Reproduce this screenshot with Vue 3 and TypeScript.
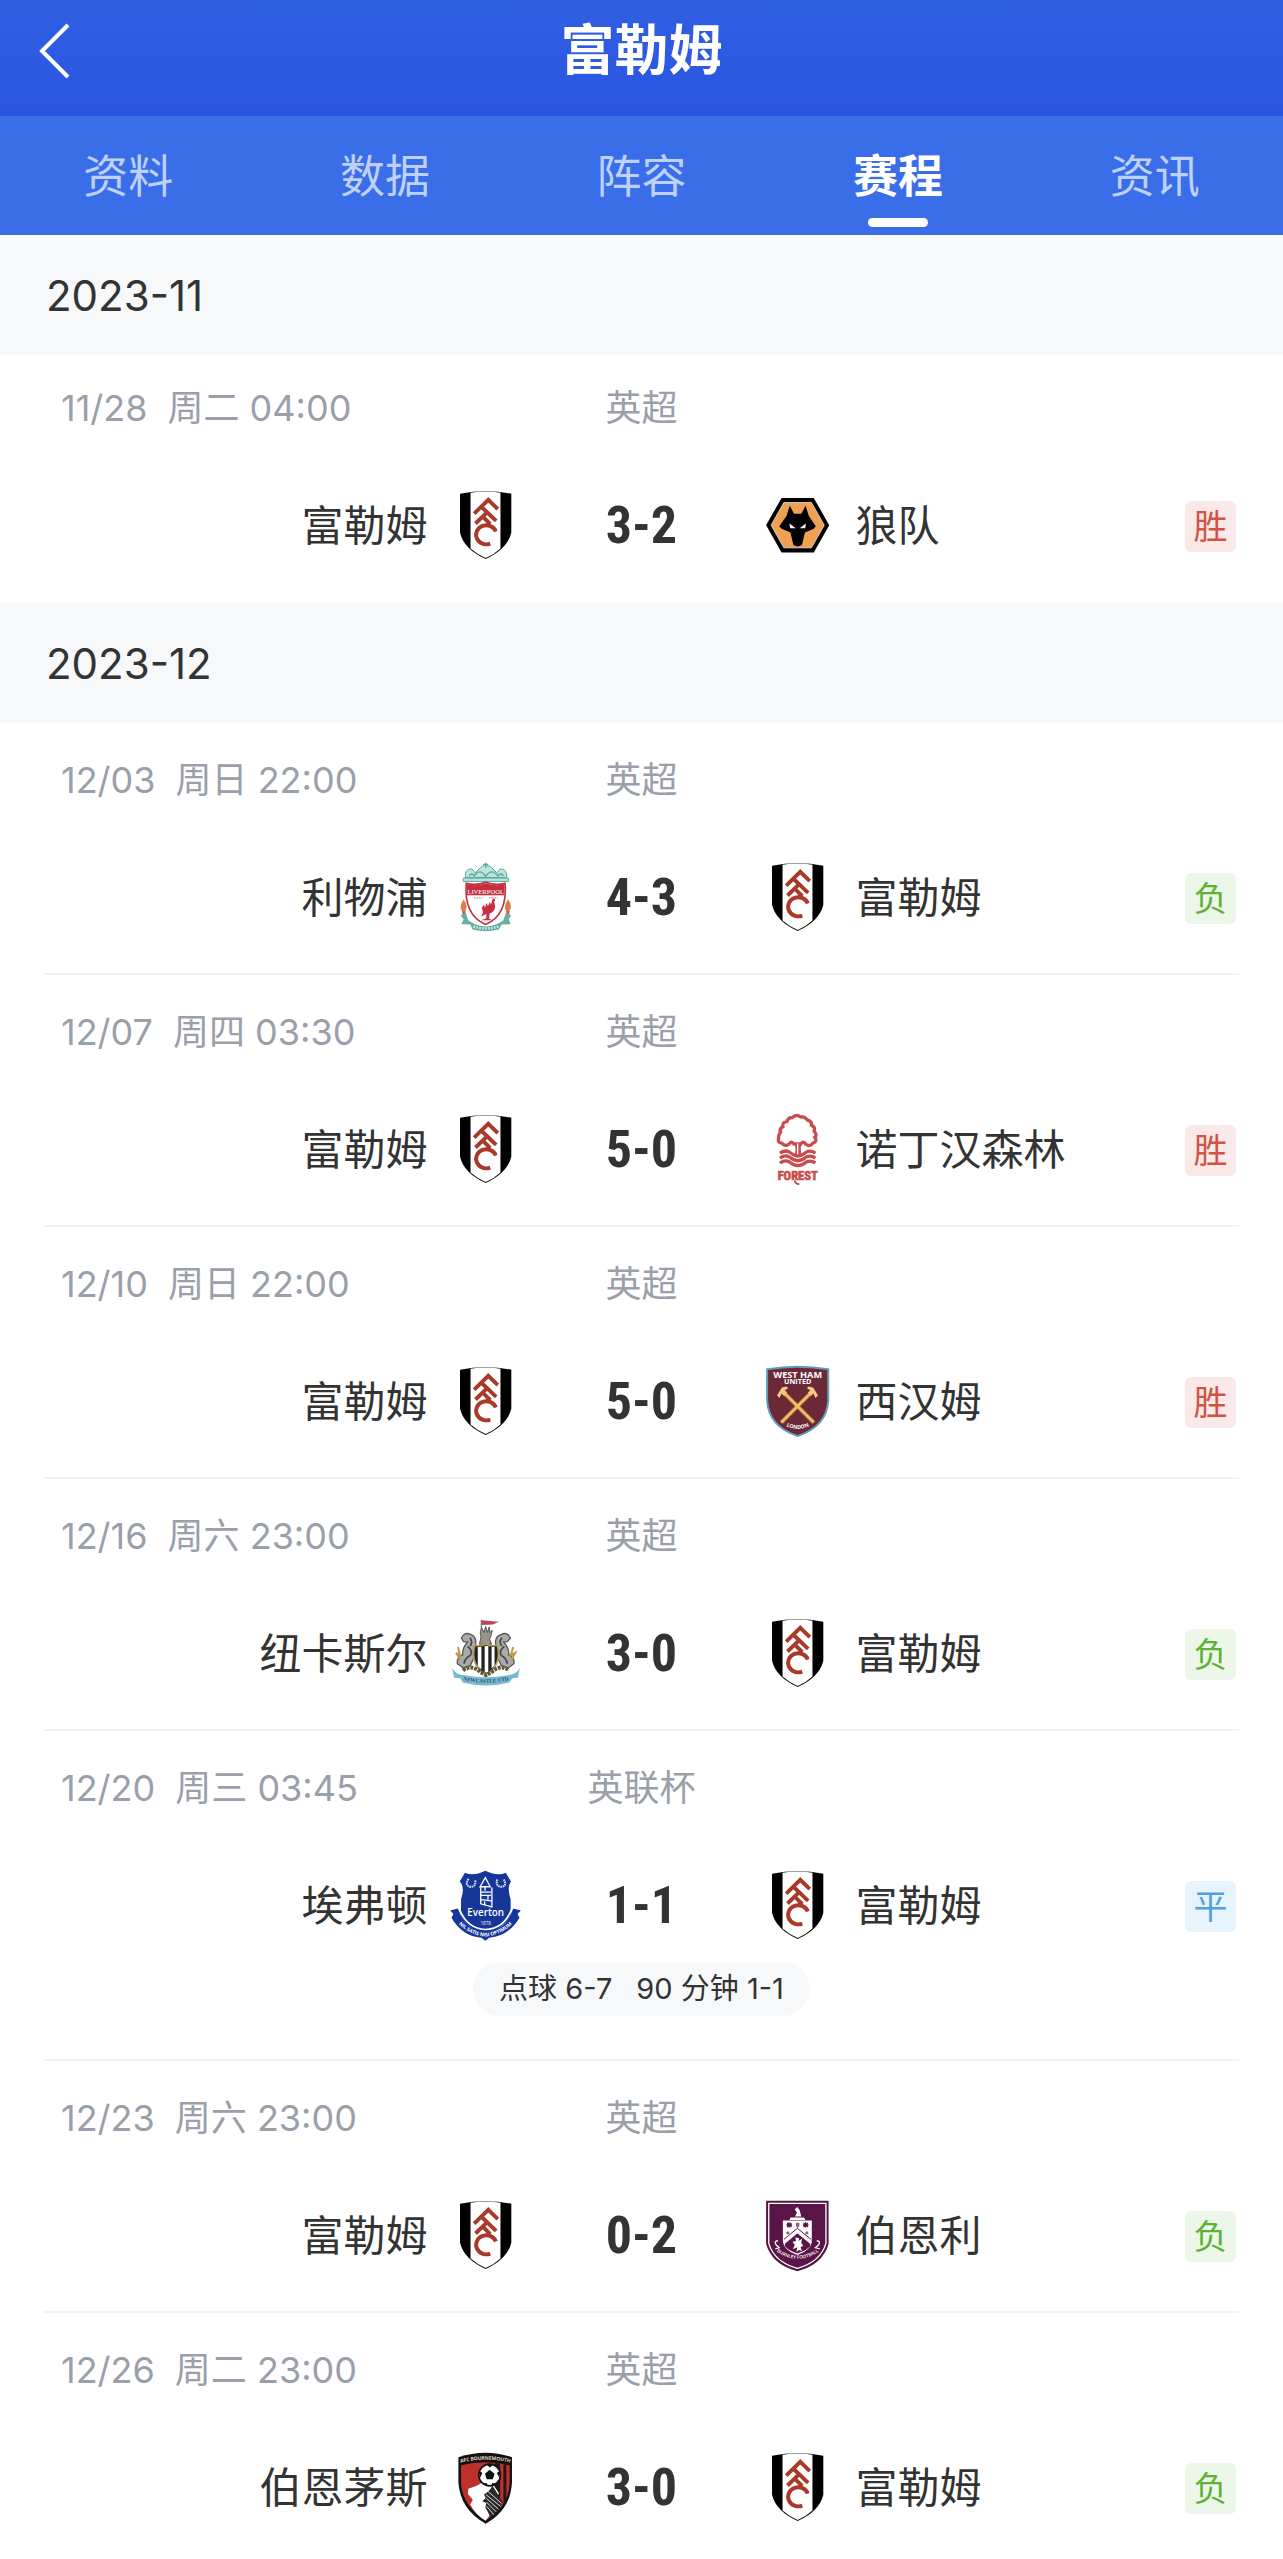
<script setup lang="ts">
type Outcome = 'win' | 'loss' | 'draw'

interface Team {
  name: string
  crest: string
}

interface Match {
  date: string
  time: string
  league: string
  home: Team
  away: Team
  score: string
  outcome: Outcome
  notes?: string[]
}

interface Month {
  label: string
  matches: Match[]
}

const fulham: Team = { name: '富勒姆', crest: 'fulham' }

const tabs = ['资料', '数据', '阵容', '赛程', '资讯']
const activeTab = '赛程'

const outcomeLabel: Record<Outcome, string> = { win: '胜', loss: '负', draw: '平' }

const months: Month[] = [
  {
    label: '2023-11',
    matches: [
      { date: '11/28', time: '周二 04:00', league: '英超', home: fulham, away: { name: '狼队', crest: 'wolves' }, score: '3-2', outcome: 'win' },
    ],
  },
  {
    label: '2023-12',
    matches: [
      { date: '12/03', time: '周日 22:00', league: '英超', home: { name: '利物浦', crest: 'liverpool' }, away: fulham, score: '4-3', outcome: 'loss' },
      { date: '12/07', time: '周四 03:30', league: '英超', home: fulham, away: { name: '诺丁汉森林', crest: 'forest' }, score: '5-0', outcome: 'win' },
      { date: '12/10', time: '周日 22:00', league: '英超', home: fulham, away: { name: '西汉姆', crest: 'westham' }, score: '5-0', outcome: 'win' },
      { date: '12/16', time: '周六 23:00', league: '英超', home: { name: '纽卡斯尔', crest: 'newcastle' }, away: fulham, score: '3-0', outcome: 'loss' },
      { date: '12/20', time: '周三 03:45', league: '英联杯', home: { name: '埃弗顿', crest: 'everton' }, away: fulham, score: '1-1', outcome: 'draw', notes: ['点球 6-7', '90 分钟 1-1'] },
      { date: '12/23', time: '周六 23:00', league: '英超', home: fulham, away: { name: '伯恩利', crest: 'burnley' }, score: '0-2', outcome: 'loss' },
      { date: '12/26', time: '周二 23:00', league: '英超', home: { name: '伯恩茅斯', crest: 'bournemouth' }, away: fulham, score: '3-0', outcome: 'loss' },
    ],
  },
]

// Club crests, drawn on a shared 210-unit grid.
const crests: Record<string, string> = {
  fulham: `
    <path d="M30 9Q108-6 186 9V128Q174 178 108 208Q42 178 30 128Z" fill="#000" />
    <path d="M62 6Q108-1 153 6V176Q134 194 108 205Q82 194 62 176Z" fill="#fff" />
    <path d="M73 70L116 28L145 56M95 49L140 92M77 100L112 66M99 79L122 102M139 124A31 29 0 1 0 122 161" fill="none" stroke="#a93a2b" stroke-width="12" />`,
  wolves: `
    <path d="M59 22H157L204 105L157 188H59L12 105Z" fill="#000" />
    <path d="M66 36H150L189 105L150 174H66L27 105Z" fill="#f0a052" stroke="#fff" stroke-width="2" />
    <path d="M84 46L97 70H119L132 46L142 77L163 108L157 116L130 127L121 165Q108 174 95 165L86 127L59 116L52 108L74 77Z" fill="#000" />
    <path d="M83 100L102 114H85ZM133 100L114 114H131Z" fill="#fff" />`,
  liverpool: `
    <path d="M40 47H178V57H40ZM46 45Q44 18 66 19L76 31L92 15L108 5L126 15L142 31L152 19Q174 18 172 45Z" fill="#bfe3dd" stroke="#55a99d" stroke-width="3" />
    <path d="M108 0V16M100 5H116M72 42Q90 14 108 42Q126 14 146 42M58 40Q66 28 74 42M144 42Q154 28 162 40" fill="none" stroke="#55a99d" stroke-width="4" />
    <path d="M49 63Q80 70 108 60Q138 70 167 63Q175 160 108 188Q41 160 49 63Z" fill="#fff" stroke="#c52f40" stroke-width="5" />
    <path d="M51 66Q80 72 108 63Q138 72 165 66V99H51Z" fill="#c52f40" />
    <text x="108" y="94" text-anchor="middle" font-size="20" font-family="Liberation Serif" fill="#fff">LIVERPOOL</text>
    <path d="M72 107H98M118 107H144" stroke="#dc8b91" stroke-width="4" stroke-dasharray="5 3" />
    <path d="M130 108Q141 112 134 119L137 134Q135 149 120 155L118 170L128 175H94L110 169V156L94 164L100 151L96 137L103 127L106 138L110 123L115 132L121 120L124 128Z" fill="#c52f40" />
    <path d="M34 145Q27 130 41 111Q55 130 47 145ZM169 145Q162 130 176 111Q190 130 182 145Z" fill="#d78149" />
    <path d="M36 145H47L45 169H39ZM170 145H181L178 169H172Z" fill="#d45752" />
    <path d="M32 160L48 153L55 175Q80 193 108 194Q138 193 162 175L169 153L186 160L178 172L184 187L157 188L148 203Q108 214 68 203L61 188L34 187L41 172Z" fill="#67afa3" />
    <path d="M71 194Q108 207 147 194" fill="none" stroke="#c8e8e4" stroke-width="8" stroke-dasharray="5 4" />`,
  forest: `
    <path d="M99 93Q91 77 82 89Q70 99 60 87Q45 84 50 72Q49 61 56 54Q51 43 63 37Q60 23 75 21Q79 8 91 9Q104-3 117 7Q130 5 137 16Q151 19 150 32Q163 38 158 50Q169 62 160 69Q169 81 155 86Q146 100 132 89Q122 77 116 93" fill="#fff" stroke="#c94b4b" stroke-width="10" />
    <path d="M96 84Q106 105 98 124H121Q114 107 121 84Z" fill="#c94b4b" />
    <path d="M108 88V124" stroke="#fff" stroke-width="4" />
    <path d="M54 117Q70 106 83 114Q109 137 134 114Q148 107 162 117M54 132Q70 121 83 129Q109 151 134 129Q148 122 162 132M54 147Q70 136 83 144Q109 166 134 144Q148 137 162 147" fill="none" stroke="#c94b4b" stroke-width="10" />
    <text x="108" y="200" text-anchor="middle" font-size="38" font-weight="700" font-family="Roboto Condensed, Roboto" fill="#c94b4b" stroke="#c94b4b" stroke-width="2">FOREST</text>
    <path d="M99 200Q101 212 113 211" fill="none" stroke="#c94b4b" stroke-width="6" />`,
  westham: `
    <path d="M15 8Q108-8 201 8V102Q197 181 108 211Q19 181 15 102Z" fill="#6b2938" stroke="#629bb9" stroke-width="6" />
    <text x="108" y="33" text-anchor="middle" font-size="28" font-weight="700" font-family="Open Sans" fill="#fff">WEST HAM</text>
    <text x="108" y="52" text-anchor="middle" font-size="22" font-weight="700" font-family="Open Sans" fill="#fff">UNITED</text>
    <path d="M68 81L157 170M147 81L58 170" stroke="#8d5535" stroke-width="14" />
    <path d="M68 81L157 170M147 81L58 170" stroke="#edbd63" stroke-width="9" />
    <path d="M45 88L60 63L74 60L79 66L69 72L76 79L67 89L59 82L53 95ZM170 88L155 63L141 60L136 66L146 72L139 79L148 89L156 82L162 95Z" fill="#f1ca85" />
    <path id="westham-arc" d="M66 177Q108 202 150 177" fill="none" />
    <text font-size="16" font-weight="700" font-family="Open Sans" fill="#fff" text-anchor="middle"><textPath href="#westham-arc" startOffset="50%">LONDON</textPath></text>`,
  newcastle: `
    <path d="M95 3V57" stroke="#777" stroke-width="4" />
    <path d="M96 5L148 9L130 18L96 19Z" fill="#bd4656" />
    <path d="M89 78L94 54Q88 37 97 29L103 43L108 24L113 42L119 25L120 43L128 35Q124 57 120 62L126 78Z" fill="#9a9687" stroke="#555" stroke-width="3" />
    <path d="M62 48Q43 39 34 59L41 70L53 71Q36 90 38 110Q20 116 22 137L40 150L61 143L72 119Q87 100 77 80Q82 55 62 48ZM156 48Q174 39 183 59L174 70L163 71Q180 90 178 110Q196 116 194 137L176 150L156 143L144 119Q129 100 139 80Q134 55 156 48Z" fill="#aaa" stroke="#555" stroke-width="4" />
    <path d="M53 84Q70 98 62 111Q45 119 42 137M165 84Q147 98 155 111Q171 119 174 137M60 58Q70 72 61 83M157 58Q147 72 157 83" fill="none" stroke="#444" stroke-width="5" />
    <path d="M24 86L30 112L18 104L31 124M192 86L184 112L198 104L187 124" fill="none" stroke="#bd9a45" stroke-width="6" />
    <path d="M75 80Q91 86 108 77Q125 86 143 80Q159 141 109 170Q59 141 75 80Z" fill="#222" stroke="#b49a56" stroke-width="5" />
    <path d="M84 86H95V154L84 145ZM105 83H116V164H105ZM126 86H135V143L126 151Z" fill="#fff" />
    <path d="M39 157Q66 138 91 162L109 172L128 161Q153 138 179 157" fill="none" stroke="#5e5b35" stroke-width="12" stroke-dasharray="9 3" />
    <path d="M6 149Q16 171 43 172Q110 185 175 172Q204 168 212 149L206 180L189 181L180 194Q108 213 38 194L31 181L12 180Z" fill="#78b9d2" />
    <path id="newcastle-arc" d="M36 186Q108 204 182 186" fill="none" />
    <text font-size="16" font-weight="700" font-family="Liberation Serif" fill="#2d5065" text-anchor="middle"><textPath href="#newcastle-arc" startOffset="50%">NEWCASTLE UTD</textPath></text>`,
  everton: `
    <path d="M45 6Q70 18 107 0Q145 18 169 6L185 33Q172 49 184 88V132Q168 174 107 196Q46 174 33 132V88Q46 49 29 33Z" fill="#16369a" />
    <path d="M0 121L23 115Q52 186 107 187Q166 186 192 115L215 121L205 132L211 143Q178 199 119 204L107 213L95 204Q36 199 4 143L10 132Z" fill="#16369a" />
    <path d="M29 119Q53 177 107 179Q164 177 186 119" fill="none" stroke="#fff" stroke-width="5" />
    <path d="M91 49L107 21L122 49ZM93 51V101L127 110V51M94 65H124M94 75H124M94 88L126 92M106 51V61M115 76V88M105 94V103" fill="none" stroke="#fff" stroke-width="4" />
    <path d="M56 25Q43 43 60 49Q80 51 76 27M143 27Q137 49 157 49Q175 46 162 25" fill="none" stroke="#d6def5" stroke-width="6" stroke-dasharray="5 2" />
    <text x="108" y="139" text-anchor="middle" font-size="30" font-weight="600" font-family="Open Sans" fill="#fff">Everton</text>
    <text x="108" y="164" text-anchor="middle" font-size="14" font-family="Open Sans" fill="#fff">1878</text>
    <path id="everton-arc" d="M12 149Q58 198 107 200Q158 198 202 149" fill="none" />
    <text font-size="15" font-weight="700" font-family="Open Sans" fill="#fff" text-anchor="middle"><textPath href="#everton-arc" startOffset="50%">NIL SATIS NISI OPTIMUM</textPath></text>`,
  burnley: `
    <path d="M12 0H202V132Q184 195 107 215Q30 195 12 132Z" fill="#4f1740" />
    <path d="M20 8H194V130Q177 187 107 206Q37 187 20 130Z" fill="#5b1447" stroke="#fff" stroke-width="4" />
    <path d="M63 60H151V120Q151 151 107 165Q63 151 63 120Z" fill="#fff" />
    <path d="M83 59L86 51H127L132 59ZM100 48L106 36L99 27L107 19L114 29L119 48Z" fill="#fff" />
    <path d="M74 74H91M82 66V82M124 74H141M132 66V82M76 68L89 80M89 68L76 80M126 68L139 80M139 68L126 80" stroke="#5b1447" stroke-width="4" />
    <path d="M103 67H113V78L108 83L103 78ZM72 98L78 92L84 98L78 104ZM130 98L136 92L142 98L136 104Z" fill="#8f6178" />
    <path d="M69 126L107 94L146 126V138Q137 151 107 161Q77 151 69 138Z" fill="#5b1447" />
    <path d="M66 118L107 84L149 118" fill="none" stroke="#5b1447" stroke-width="3" />
    <path d="M66 129L107 95L149 129" fill="none" stroke="#fff" stroke-width="7" />
    <path d="M101 112L113 114L110 123L121 116L119 129L125 137L117 142L121 154L112 150L104 156L107 142L94 148L99 134L92 125L103 123Z" fill="#fff" />
    <path d="M48 122Q35 123 42 134L52 143L40 147M166 122Q179 123 172 134L162 143L175 147" fill="none" stroke="#fff" stroke-width="4" />
    <path id="burnley-arc" d="M40 152Q107 202 176 152" fill="none" />
    <text font-size="14" font-weight="600" font-family="Open Sans" fill="#fff" text-anchor="middle"><textPath href="#burnley-arc" startOffset="50%">BURNLEY FOOTBALL</textPath></text>`,
  bournemouth: `
    <path d="M25 14Q108-14 188 14V91Q184 174 108 216Q31 174 25 91Z" fill="#111" />
    <path d="M33 38Q108 21 181 38V94Q177 165 108 206Q39 165 33 94Z" fill="#bd302c" />
    <path d="M136 31L152 33V172L136 188ZM162 34L171 36V148L162 162Z" fill="#241719" />
    <path d="M55 110Q77 104 96 92L132 99L148 123L130 177L108 207Q77 190 61 158L69 143L54 126Z" fill="#fff" />
    <path d="M103 127Q119 119 129 101L160 151L134 188L122 195L107 166L110 153L98 148L108 138Z" fill="#292929" />
    <path d="M115 118L156 154M109 128L153 163M110 139L147 172M111 151L140 180M111 163L133 189" stroke="#ddd" stroke-width="3" />
    <circle cx="120" cy="68" r="33" fill="#fff" stroke="#111" stroke-width="5" />
    <path d="M120 52L135 64L130 81H111L106 64ZM110 36H132L121 45ZM88 55L98 62L91 76ZM152 55L142 62L150 77ZM100 94L112 92L112 101ZM128 92L140 94L127 101Z" fill="#111" />
    <path id="bournemouth-arc" d="M29 31Q108 12 185 31" fill="none" />
    <text font-size="15" font-weight="700" font-family="Open Sans" fill="#eadac8" text-anchor="middle"><textPath href="#bournemouth-arc" startOffset="50%">AFC BOURNEMOUTH</textPath></text>`,
}
</script>

<template>
  <div class="page">
    <header class="topbar">
      <button class="back" type="button" aria-label="返回">
        <svg viewBox="0 0 32 56" aria-hidden="true"><path d="M29 2L3 28L29 54" fill="none" stroke="#fff" stroke-width="4" /></svg>
      </button>
      <h1 class="title">富勒姆</h1>
    </header>

    <nav class="tabs">
      <a v-for="tab in tabs" :key="tab" href="#" class="tab" :class="{ active: tab === activeTab }">{{ tab }}</a>
    </nav>

    <main>
      <section v-for="month in months" :key="month.label" class="month">
        <h2 class="month-label">{{ month.label }}</h2>
        <ul class="matches">
          <li v-for="match in month.matches" :key="match.date" class="match">
            <div class="meta">
              <div class="when"><span>{{ match.date }}</span><span>{{ match.time }}</span></div>
              <span>{{ match.league }}</span>
            </div>
            <div class="fixture">
              <div class="side home">
                <span>{{ match.home.name }}</span>
                <svg class="crest" viewBox="4 1 210 213" aria-hidden="true" v-html="crests[match.home.crest]"></svg>
              </div>
              <strong class="score">{{ match.score }}</strong>
              <div class="side">
                <svg class="crest" viewBox="4 1 210 213" aria-hidden="true" v-html="crests[match.away.crest]"></svg>
                <span>{{ match.away.name }}</span>
                <span class="badge" :class="match.outcome">{{ outcomeLabel[match.outcome] }}</span>
              </div>
            </div>
            <div v-if="match.notes" class="notes">
              <span v-for="note in match.notes" :key="note">{{ note }}</span>
            </div>
          </li>
        </ul>
      </section>
    </main>
  </div>
</template>

<style>
body {
  margin: 0;
  background: #fff;
}
</style>

<style scoped>
.page {
  font-family: Inter, "Noto Sans CJK SC", sans-serif;
  color: #333;
  background: #fff;
}

.topbar {
  display: grid;
  grid-template-columns: 1fr auto 1fr;
  align-items: center;
  box-sizing: border-box;
  height: 116px;
  padding: 0 39px 15px;
  background: linear-gradient(#2f5fe3, #2b55e0);
}

.back {
  justify-self: start;
  padding: 0;
  border: 0;
  background: none;
  cursor: pointer;
}

.back svg {
  display: block;
  width: 32px;
  height: 56px;
}

.title {
  margin: 0;
  font-size: 54px;
  line-height: 80px;
  font-weight: 700;
  color: #fff;
}

.tabs {
  display: grid;
  grid-template-columns: repeat(5, 1fr);
  background: #3a6ee8;
}

.tab {
  display: flex;
  flex-direction: column;
  align-items: center;
  padding: 27px 0 8px;
  font-size: 45px;
  line-height: 68px;
  color: #bdd1fa;
  text-decoration: none;
}

.tab::after {
  content: "";
  width: 60px;
  height: 9px;
  margin-top: 7px;
  border-radius: 5px;
}

.tab.active {
  font-weight: 700;
  color: #fff;
}

.tab.active::after {
  background: #fff;
}

.month-label {
  margin: 0;
  padding: 2px 46px 0;
  font-size: 42px;
  line-height: 118px;
  font-weight: 400;
  background: #f7f8fa;
}

.matches {
  margin: 0;
  padding: 0 44px;
  list-style: none;
}

.match {
  padding: 32px 3px 40px;
  border-bottom: 2px solid #f1f2f4;
}

.match:last-child {
  border-bottom-color: transparent;
}

.match:only-child {
  padding-top: 28px;
}

.month:last-child .match:last-child {
  padding-bottom: 32px;
}

.meta {
  display: grid;
  grid-template-columns: 1fr auto 1fr;
  padding: 0 14px;
  margin-bottom: 58px;
  font-size: 36px;
  line-height: 50px;
  color: #9b9fa9;
}

.when {
  display: flex;
  gap: 20px;
}

.fixture {
  display: grid;
  grid-template-columns: 1fr 242px 1fr;
  align-items: center;
  font-size: 42px;
  line-height: 60px;
}

.side {
  display: flex;
  align-items: center;
  gap: 23px;
}

.home {
  justify-content: flex-end;
}

.crest {
  width: 70px;
  height: 70px;
  flex: none;
  overflow: visible;
}

.score {
  text-align: center;
  font-family: "Roboto Condensed", Roboto, sans-serif;
  font-size: 52px;
  font-weight: 700;
}

.badge {
  width: 51px;
  margin-left: auto;
  border-radius: 6px;
  font-size: 34px;
  line-height: 51px;
  text-align: center;
}

.badge.win {
  color: #cf5443;
  background: #fae9e8;
}

.badge.loss {
  color: #5cb235;
  background: #edf7e9;
}

.badge.draw {
  color: #519fe5;
  background: #e8f4fd;
}

.notes {
  display: flex;
  gap: 24px;
  width: max-content;
  margin: 21px auto 3px;
  padding: 0 26px;
  border-radius: 27px;
  font-size: 29px;
  line-height: 54px;
  background: #f7f8fa;
}
</style>
